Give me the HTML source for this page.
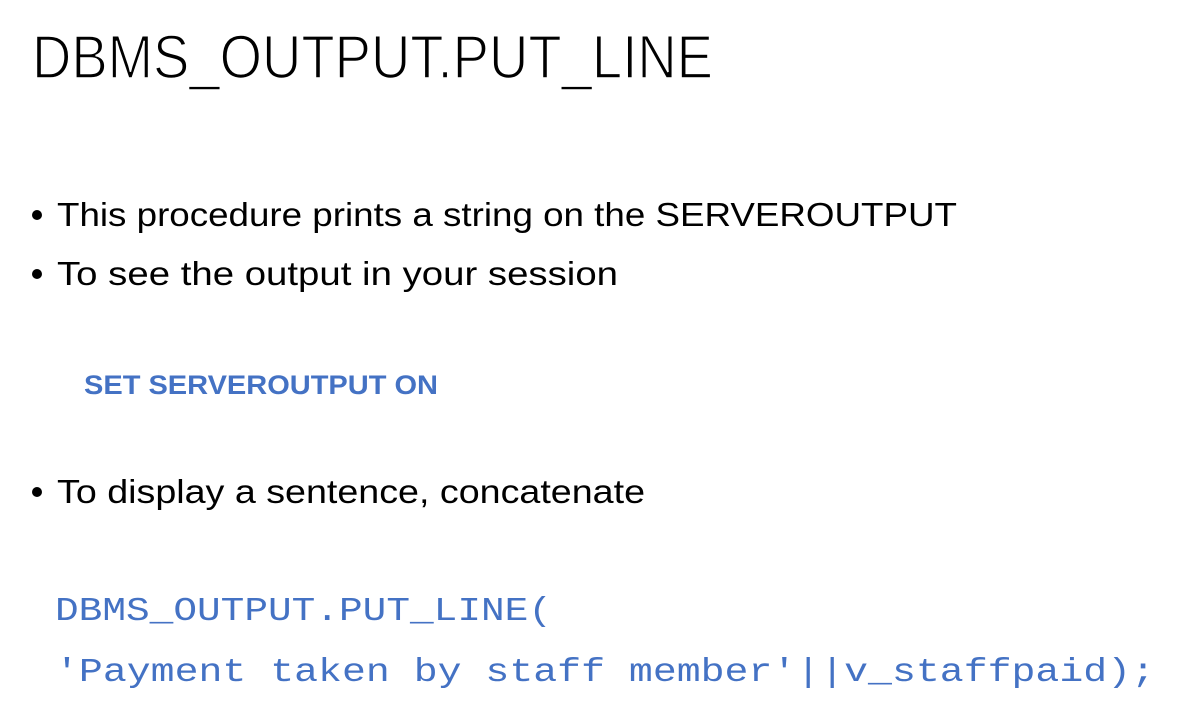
<!DOCTYPE html>
<html><head><meta charset="utf-8"><style>
html,body{margin:0;padding:0;background:#fff;width:1191px;height:725px;overflow:hidden}
</style></head><body>
<svg width="1191" height="725" xmlns="http://www.w3.org/2000/svg">
<text x="32" y="78" font-family="Liberation Sans, sans-serif" font-size="61" fill="#000" stroke="#fff" stroke-width="1.6" textLength="681" lengthAdjust="spacingAndGlyphs">DBMS_OUTPUT.PUT_LINE</text>
<g font-family="Liberation Sans, sans-serif" font-size="33" fill="#000">
<circle cx="37" cy="215" r="5"/>
<text x="57" y="226" textLength="900" lengthAdjust="spacingAndGlyphs">This procedure prints a string on the SERVEROUTPUT</text>
<circle cx="37" cy="274" r="5"/>
<text x="57" y="285" textLength="561" lengthAdjust="spacingAndGlyphs">To see the output in your session</text>
<circle cx="37" cy="492" r="5"/>
<text x="57" y="503" textLength="588" lengthAdjust="spacingAndGlyphs">To display a sentence, concatenate</text>
</g>
<text x="84" y="394" font-family="Liberation Sans, sans-serif" font-size="27" font-weight="bold" fill="#4472C4" textLength="354" lengthAdjust="spacingAndGlyphs">SET SERVEROUTPUT ON</text>
<g font-family="Liberation Mono, monospace" font-size="33" fill="#4472C4">
<text x="55" y="620" textLength="497" lengthAdjust="spacingAndGlyphs">DBMS_OUTPUT.PUT_LINE(</text>
<text x="55" y="681" textLength="1100" lengthAdjust="spacingAndGlyphs">'Payment taken by staff member'||v_staffpaid);</text>
</g>
</svg>
</body></html>
